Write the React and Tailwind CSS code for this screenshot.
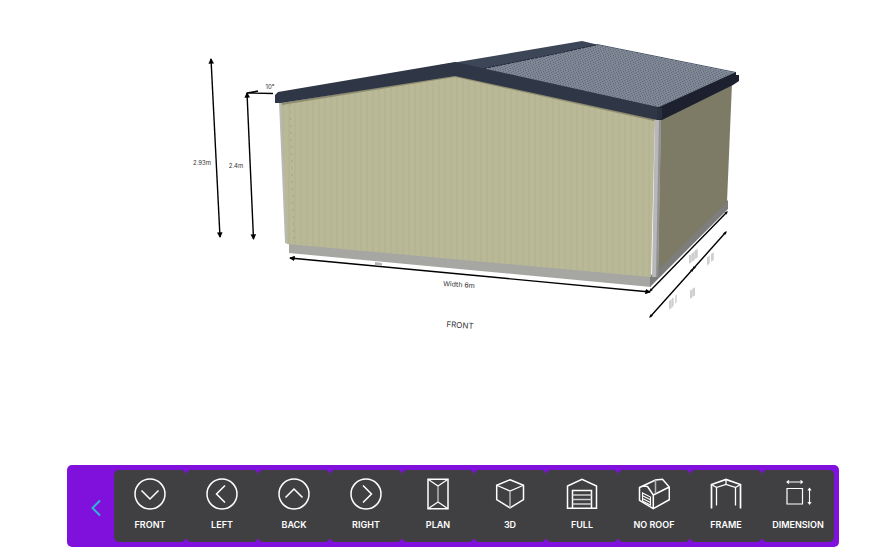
import React, { useState } from "react";

const icons = {
  front: (
    <>
      <circle cx="16" cy="16" r="15" />
      <path d="M7.5 12.5 16 21l8.5-8.5" />
    </>
  ),
  left: (
    <>
      <circle cx="16" cy="16" r="15" />
      <path d="M19 7.5 10.5 16l8.5 8.5" />
    </>
  ),
  back: (
    <>
      <circle cx="16" cy="16" r="15" />
      <path d="M7.5 19.5 16 11l8.5 8.5" />
    </>
  ),
  right: (
    <>
      <circle cx="16" cy="16" r="15" />
      <path d="M13 7.5 21.5 16 13 24.5" />
    </>
  ),
  plan: (
    <>
      <path d="M6 1.2h20v29.6H6z" />
      <path d="M6 1.2 16 8l10-6.8M6 30.8 16 24l10 6.8" strokeWidth="1.2" />
      <path d="M16 8v16" stroke="#b5b5b6" />
    </>
  ),
  cube: (
    <>
      <path d="M16 1.8 29.5 7.2v14.4L16 29.8 2.7 21.600V7.2z" />
      <path d="M2.700 7.2 16 13l13.500-5.800" strokeWidth="1.2" />
      <path d="M16 13v16.800" stroke="#b5b5b6" />
    </>
  ),
  full: (
    <>
      <path d="M1.5 30.3V8L16 1.4 30.500 8v22.300z" />
      <path d="M6.500 30V12.500h19V30" />
      <path d="M6.500 17h19M6.500 21.500h19M6.500 26h19" strokeWidth="1.4" stroke="#d0d0d0" />
    </>
  ),
  noRoof: (
    <>
      <path d="M1.5 9.500 17.500 2l7-.8 6.800 7.800v12.700l-16 9L1.500 22.300zM1.500 9.500 5 8l4.500.5 5.800 8.500v13.700M15.300 17l16-8" />
      <path d="M17.500 2v13.500" stroke="#b5b5b6" />
      <path d="M4.500 23v-8l8 4v8zM4.500 17.700l8 4M4.500 20.400l8 4" strokeWidth="1.1" />
    </>
  ),
  frame: (
    <>
      <path d="M1.500 30.500V6.500L16 1.400l14.500 5.100v24" strokeWidth="1.7" />
      <path d="M6.500 27.500V9.500L16 6.500l9.500 3v18M1.500 6.500l5 3M30.500 6.500l-5 3M16 1.400v5.100" strokeWidth="1.3" />
    </>
  ),
  dimension: (
    <>
      <path d="M5 10.500h15.500V26H5z" strokeWidth="1.2" />
      <path d="M5 4h15.500M7 2.400 5 4l2 1.600M18.500 2.400l2 1.600-2 1.600M27.500 10.500V26M25.900 12.500l1.600-2 1.600 2M25.900 24l1.600 2 1.600-2" strokeWidth="1.1" />
    </>
  ),
};

const views = [
  { id: "front", label: "FRONT" },
  { id: "left", label: "LEFT" },
  { id: "back", label: "BACK" },
  { id: "right", label: "RIGHT" },
  { id: "plan", label: "PLAN" },
  { id: "cube", label: "3D" },
  { id: "full", label: "FULL" },
  { id: "noRoof", label: "NO ROOF" },
  { id: "frame", label: "FRAME" },
  { id: "dimension", label: "DIMENSION" },
];

const ShedModel = () => (
  <svg
    viewBox="0 0 877 465"
    className="block w-full h-auto font-['Inter',sans-serif]"
    role="img"
    aria-label="Shed model"
  >
    <defs>
      <pattern id="cladding" width="6" height="10" patternUnits="userSpaceOnUse">
        <rect width="6" height="10" fill="#bab997" />
        <rect width="2" height="10" fill="#b5b493" />
      </pattern>
      <pattern id="roofing" width="5" height="7" patternUnits="userSpaceOnUse">
        <rect width="5" height="7" fill="#7f8694" />
        <path d="M0 0h1v1H0zM3 1h1v1H3zM1 2h1v1H1zM4 3h1v1H4zM2 4h1v1H2zM0 5h1v1H0zM3 6h1v1H3z" fill="#626a7b" />
      </pattern>
      <marker id="arrow" viewBox="0 0 6 6" refX="5" refY="3" markerWidth="4" markerHeight="4" orient="auto-start-reverse">
        <path d="M0 0 6 3 0 6z" />
      </marker>
      <marker id="dot" viewBox="0 0 6 6" refX="4" refY="3" markerWidth="3" markerHeight="3" orient="auto-start-reverse">
        <path d="M0 1 6 3 0 5z" />
      </marker>
    </defs>

    {/* slab */}
    <path d="M289 243 651 276v11L289 253z" fill="#a6a7a3" />
    <path d="M650 276 728 200v9l-78 78z" fill="#7d7d7b" />

    {/* walls */}
    <path d="M279 102h4l5 142-3-1z" fill="#b9b9bb" />
    <path d="M281 103 455 75 655 119l-4 158-364-33z" fill="url(#cladding)" />
    <path d="M290 104 294 241" stroke="#a5a483" strokeDasharray="2 5" />
    <path d="M282 104 455 76 654 120" stroke="#8f8d70" strokeWidth="2" fill="none" />
    <path d="M660 118 732 83 727 202 657 271z" fill="#7d7b66" />
    <path d="M655 119h6l-3 158h-6z" fill="#b8b8ba" />
    <path d="M659 119h2l-3 158h-2z" fill="#919192" />

    {/* roof */}
    <path d="M440 65 582 41l17 4-114 24-30 3z" fill="#3d4657" />
    <path d="M598 45 736 73 659 109 484 69z" fill="url(#roofing)" />
    <path d="M484 68.500 560 53l38-8.500" stroke="#20283a" strokeDasharray="3 1" fill="none" />
    <path d="M597 44.500 736 72.500" stroke="#4b5567" fill="none" />
    <path d="M275 95l3-3L455 62 658 107l4 2v11h-5L455 76 281 103l-6 0z" fill="#2f3645" />
    <path d="M657 108 736 72v3h3v6l-6 4-71 35h-3z" fill="#1d212f" />
    <path d="M657 108h5v11l-5 1z" fill="#2a3040" />

    {/* dimension lines */}
    <g stroke="#000" strokeWidth="1.4" fill="none">
      <path d="M211 59 220 237" markerStart="url(#arrow)" markerEnd="url(#arrow)" />
      <path d="M247 93 253.500 239" markerStart="url(#arrow)" markerEnd="url(#arrow)" />
      <path d="M273 93.500 247 93 258 91" />
      <path d="M290 258 650 292" markerStart="url(#arrow)" markerEnd="url(#arrow)" />
      <path d="M650 291 727 212" markerStart="url(#dot)" markerEnd="url(#dot)" />
      <path d="M650 317 693 269" markerStart="url(#dot)" markerEnd="url(#dot)" />
      <path d="M693 269 726 232" markerStart="url(#dot)" markerEnd="url(#dot)" />
    </g>

    {/* side labels seen edge on */}
    <g fill="#dadada">
      <path d="M689 256l9-8v9l-9 7z" />
      <path d="M707 258l3-3v8l-3 3zM711 254l3-2v8l-3 2z" />
      <path d="M669 301l4-3v9l-4 3zM675 296l2-2v8l-2 2z" />
      <path d="M690 291l5-4v8l-5 4z" />
    </g>
    <path d="M690 255v8M693 253v8M696 250v8M708 257v7M712 254v6M670 301v7M673 298v8M691 290v8M694 288v8" stroke="#c2c2c2" />
    <path d="M375 262l7 1v3l-7-1z" fill="#b4b4b4" />

    <g fill="#333" textAnchor="middle">
      <text x="202" y="165" fontSize="6">2.93m</text>
      <text x="236" y="168" fontSize="6">2.4m</text>
      <text x="270" y="89" fontSize="6">10°</text>
      <text x="459" y="287" fontSize="7" transform="rotate(4 459 284)">Width 6m</text>
      <text x="460" y="328" fontSize="8" transform="rotate(4 460 325)">FRONT</text>
    </g>
  </svg>
);

const App = () => {
  const [view, setView] = useState("cube");

  return (
    <main className="bg-white">
      <ShedModel />
      <nav className="ml-[67px] mr-[38px] mb-2 flex rounded-[5px] bg-[#8010dc] py-[5px] pr-[5px] pl-[11px]">
        <button type="button" aria-label="Collapse" className="flex w-9 shrink-0 items-center justify-center pt-1">
          <svg viewBox="0 0 10 18" className="h-[18px] w-[10px]" fill="none" stroke="#2bb8d0" strokeWidth="2">
            <path d="M9 1.5 1.5 9 9 16.5" />
          </svg>
        </button>
        {views.map((item) => (
          <button
            key={item.id}
            type="button"
            aria-pressed={view === item.id}
            onClick={() => setView(item.id)}
            className="flex min-w-0 flex-1 flex-col items-center gap-2 rounded-[5px] bg-[#404042] pt-2 pb-[10px] text-white"
          >
            <svg viewBox="0 0 32 32" className="size-8" fill="none" stroke="currentColor" strokeWidth="1.5">
              {icons[item.id]}
            </svg>
            <span className="font-['Inter',sans-serif] text-[9px] leading-[14px] font-semibold whitespace-nowrap">
              {item.label}
            </span>
          </button>
        ))}
      </nav>
    </main>
  );
};

export default App;
